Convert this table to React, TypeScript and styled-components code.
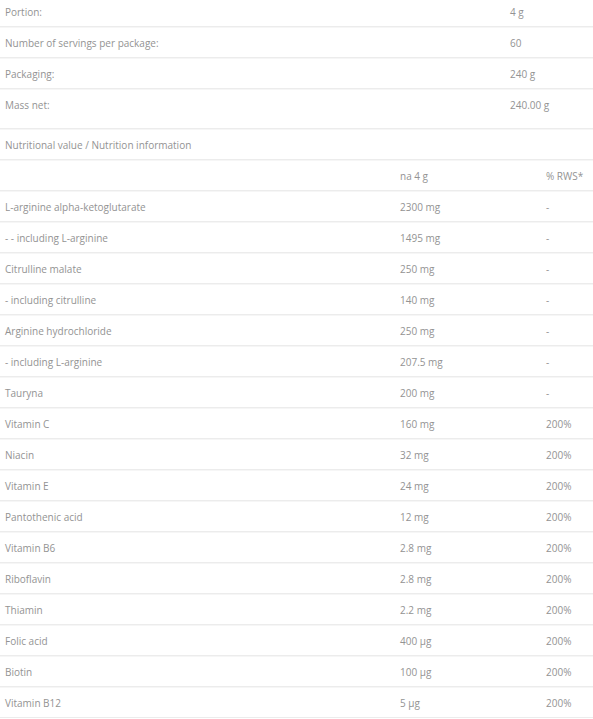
import React from "react";
import styled, { createGlobalStyle } from "styled-components";

const Global = createGlobalStyle`
  html, body { margin: 0; padding: 0; background: #ffffff; }
  body { font-family: "Open Sans", "Liberation Sans", sans-serif; }
`;

const Page = styled.div`
  width: 593px;
  margin-top: -4px;
  display: flex;
  flex-direction: column;
  color: #939393;
  font-size: 10px;
  font-weight: 400;
`;

const Row = styled.div<{ $cols: string; $extra?: number }>`
  display: grid;
  grid-template-columns: ${(p) => p.$cols};
  align-items: start;
  height: ${(p) => 31 + (p.$extra || 0)}px;
  box-sizing: border-box;
  border-bottom: 1px solid #ececec;
  box-shadow: 0 1px 0 #f6f6f6;
`;

const Cell = styled.div`
  line-height: 31px;
  padding-top: 1px;
  padding-left: 5px;
  white-space: nowrap;
`;

const ValCell = styled.div`
  line-height: 31px;
  padding-top: 1px;
  white-space: nowrap;
`;

const info: [string, string][] = [
  ["Portion:", "4 g"],
  ["Number of servings per package:", "60"],
  ["Packaging:", "240 g"],
  ["Mass net:", "240.00 g"],
];

const nutr: [string, string, string][] = [
  ["L-arginine alpha-ketoglutarate", "2300 mg", "-"],
  ["- - including L-arginine", "1495 mg", "-"],
  ["Citrulline malate", "250 mg", "-"],
  ["- including citrulline", "140 mg", "-"],
  ["Arginine hydrochloride", "250 mg", "-"],
  ["- including L-arginine", "207.5 mg", "-"],
  ["Tauryna", "200 mg", "-"],
  ["Vitamin C", "160 mg", "200%"],
  ["Niacin", "32 mg", "200%"],
  ["Vitamin E", "24 mg", "200%"],
  ["Pantothenic acid", "12 mg", "200%"],
  ["Vitamin B6", "2.8 mg", "200%"],
  ["Riboflavin", "2.8 mg", "200%"],
  ["Thiamin", "2.2 mg", "200%"],
  ["Folic acid", "400 µg", "200%"],
  ["Biotin", "100 µg", "200%"],
  ["Vitamin B12", "5 µg", "200%"],
];

const INFO_COLS = "510px 1fr";
const NUTR_COLS = "400px 146px 1fr";

export default function App() {
  return (
    <>
      <Global />
      <Page>
        {info.map(([k, v], i) => (
          <Row key={k} $cols={INFO_COLS} $extra={i === info.length - 1 ? 9 : 0}>
            <Cell>{k}</Cell>
            <ValCell>{v}</ValCell>
          </Row>
        ))}
        <Row $cols="1fr">
          <Cell>Nutritional value / Nutrition information</Cell>
        </Row>
        <Row $cols={NUTR_COLS}>
          <Cell></Cell>
          <ValCell>na 4 g</ValCell>
          <ValCell>% RWS*</ValCell>
        </Row>
        {nutr.map(([k, a, b], i) => (
          <Row key={i} $cols={NUTR_COLS}>
            <Cell>{k}</Cell>
            <ValCell>{a}</ValCell>
            <ValCell>{b}</ValCell>
          </Row>
        ))}
      </Page>
    </>
  );
}
